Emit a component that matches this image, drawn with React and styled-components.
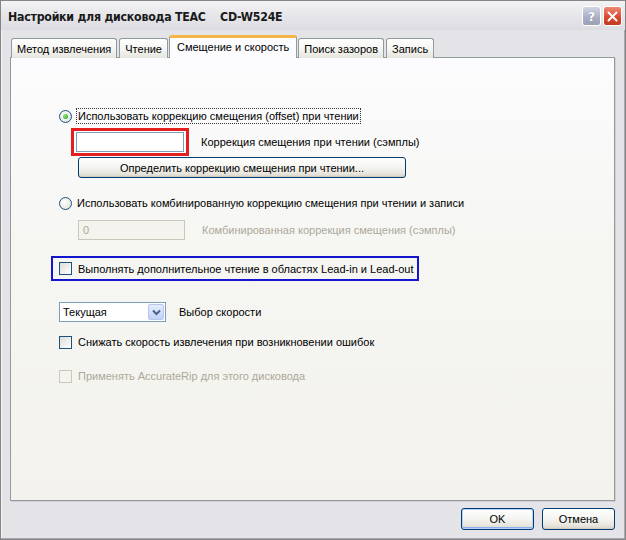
import React from "react";
import styled, { createGlobalStyle, css } from "styled-components";

const Global = createGlobalStyle`
  html, body { margin: 0; padding: 0; background: #e3e3e8; }
  * { box-sizing: border-box; }
`;

const FONT = `"Liberation Sans", Arial, sans-serif`;

const Window = styled.div`
  width: 626px;
  height: 540px;
  display: flex;
  flex-direction: column;
  background: #e4e3e8;
  border: 1px solid #858585;
  box-shadow: inset -1px -1px 0 #a8a8ac, inset 1px 0 0 #f4f4f6;
  font-family: ${FONT};
  font-size: 11px;
  color: #000;
`;

const TitleBar = styled.div`
  height: 29px;
  flex: none;
  display: flex;
  align-items: center;
  padding: 1px 3px 0 7px;
  background: linear-gradient(#f3f3f5, #e6e6ea 50%, #dcdce2);
`;

const TitleText = styled.div`
  flex: 1;
  font-family: "DejaVu Sans", "Liberation Sans", sans-serif;
  font-size: 13px;
  font-weight: bold;
  letter-spacing: -0.3px;
  color: #1a1a1a;
  white-space: pre;
  transform: scaleX(0.85);
  transform-origin: left center;
`;

const CaptionButton = styled.div`
  width: 19px;
  height: 20px;
  margin-left: 2px;
  border-radius: 3px;
  display: flex;
  align-items: center;
  justify-content: center;
  border: 1px solid #fff;
  ${(p) =>
    p.$close
      ? css`
          background: linear-gradient(#ee8a72, #d8452c 60%, #c33a22);
        `
      : css`
          background: linear-gradient(#d2d6e2, #a9aec4 60%, #9ba0b8);
        `}
`;

const HelpMark = styled.span`
  color: #fff;
  font-family: "DejaVu Sans", sans-serif;
  font-weight: bold;
  font-size: 13px;
  text-shadow: 0 0 1px #6a7090;
`;

const Body = styled.div`
  flex: 1;
  display: flex;
  flex-direction: column;
  padding: 5px 10px 0 9px;
`;

const TabRow = styled.div`
  height: 23px;
  display: flex;
  align-items: flex-end;
  padding-left: 1px;
  position: relative;
  z-index: 1;
  margin-bottom: -1px;
`;

const Tab = styled.div`
  height: ${(p) => (p.$active ? 23 : 20)}px;
  padding: 0 5px;
  margin-right: ${(p) => (p.$active ? 0 : 2)}px;
  margin-left: ${(p) => (p.$active ? -1 : 0)}px;
  display: flex;
  align-items: center;
  border: 1px solid #919b9c;
  border-bottom: none;
  border-radius: 3px 3px 0 0;
  white-space: nowrap;
  background: ${(p) =>
    p.$active
      ? "#fcfcfe"
      : "linear-gradient(#ffffff, #f3f3ef 60%, #e6e5de)"};
  ${(p) =>
    p.$active &&
    css`
      border-top: 3px solid #f5b544;
      padding: 0 7px;
      margin-right: 1px;
      padding-bottom: 2px;
    `}
`;

const Panel = styled.div`
  height: 444px;
  border: 1px solid #919b9c;
  background: linear-gradient(#fcfcfe, #f6f6f3 40%, #f3f2ec);
  box-shadow: 1px 1px 0 #d0d0d4;
  display: flex;
  flex-direction: column;
  padding: 49px 0 0 48px;
`;

const Row = styled.div`
  display: flex;
  align-items: center;
  height: ${(p) => p.$h || 18}px;
  margin-top: ${(p) => p.$mt || 0}px;
  margin-left: ${(p) => p.$ml || 0}px;
`;

const Radio = styled.span`
  width: 13px;
  height: 13px;
  flex: none;
  border-radius: 50%;
  border: 1px solid #1c5180;
  background: radial-gradient(circle at 40% 40%, #ffffff, #e4e4dd 80%);
  display: flex;
  align-items: center;
  justify-content: center;
  margin-right: 5px;
  &::after {
    content: "";
    display: ${(p) => (p.$checked ? "block" : "none")};
    width: 5px;
    height: 5px;
    border-radius: 50%;
    background: radial-gradient(circle at 35% 35%, #8ee27f, #21a121);
  }
`;

const Check = styled.span`
  width: 13px;
  height: 13px;
  flex: none;
  border: 1px solid ${(p) => (p.$disabled ? "#cac8bb" : "#1c5180")};
  background: ${(p) =>
    p.$disabled ? "#f4f3ee" : "linear-gradient(135deg, #dcdcd7, #ffffff)"};
  margin-right: 6px;
`;

const Label = styled.span`
  white-space: nowrap;
  color: ${(p) => (p.$disabled ? "#aca899" : "#000")};
  margin-left: ${(p) => p.$ml || 0}px;
`;

const FocusLabel = styled(Label)`
  outline: 1px dotted #333;
  padding: 1px 1px;
`;

const RedBox = styled.div`
  border: 3px solid #e41f1f;
  padding: 1px 2px;
  background: #fff;
  display: flex;
`;

const TextInput = styled.div`
  width: ${(p) => p.$w || 107}px;
  height: ${(p) => p.$h || 20}px;
  border: 1px solid ${(p) => (p.$disabled ? "#c9c7ba" : "#7f9db9")};
  background: ${(p) => (p.$disabled ? "#f4f3ee" : "#fff")};
  color: #aca899;
  padding-left: 4px;
  display: flex;
  align-items: center;
`;

const PushButton = styled.div`
  width: ${(p) => p.$w}px;
  height: ${(p) => p.$h || 21}px;
  border: 1px solid #003c74;
  border-radius: 3px;
  background: linear-gradient(#ffffff, #f4f4f0 50%, #e6e4dc 85%, #d6d0c5);
  box-shadow: inset 0 -1px 0 #d0ccc0;
  display: flex;
  align-items: center;
  justify-content: center;
  white-space: nowrap;
  ${(p) =>
    p.$default &&
    css`
      box-shadow: inset 0 0 0 1px #b7d2f8, inset 0 -2px 0 #8fb0ec;
    `}
`;

const BlueBox = styled.div`
  width: 368px;
  height: 25px;
  border: 2px solid #1515d0;
  display: flex;
  align-items: center;
  padding-left: 6px;
  margin-left: -8px;
`;

const Select = styled.div`
  width: 107px;
  height: 20px;
  border: 1px solid #7f9db9;
  background: #fff;
  display: flex;
  align-items: center;
  padding: 1px;
  margin-right: 13px;
`;

const SelectText = styled.span`
  flex: 1;
  padding-left: 2px;
`;

const SelectArrow = styled.span`
  width: 16px;
  height: 16px;
  border-radius: 2px;
  border: 1px solid #b6c5e9;
  background: linear-gradient(#e4ecfd, #c1d2f8);
  display: flex;
  align-items: center;
  justify-content: center;
`;

const Footer = styled.div`
  display: flex;
  justify-content: flex-end;
  gap: 8px;
  padding: 7px 0 0;
`;

export default function App() {
  return (
    <>
      <Global />
      <Window>
        <TitleBar>
          <TitleText>{"Настройки для дисковода TEAC    CD-W524E"}</TitleText>
          <CaptionButton>
            <HelpMark>?</HelpMark>
          </CaptionButton>
          <CaptionButton $close>
            <svg width="11" height="11" viewBox="0 0 11 11">
              <path d="M1.5 1.5 L9.5 9.5 M9.5 1.5 L1.5 9.5" stroke="#fff" strokeWidth="2" strokeLinecap="round" />
            </svg>
          </CaptionButton>
        </TitleBar>
        <Body>
          <TabRow>
            <Tab>Метод извлечения</Tab>
            <Tab>Чтение</Tab>
            <Tab $active>Смещение и скорость</Tab>
            <Tab>Поиск зазоров</Tab>
            <Tab>Запись</Tab>
          </TabRow>
          <Panel>
            <Row>
              <Radio $checked />
              <FocusLabel>Использовать коррекцию смещения (offset) при чтении</FocusLabel>
            </Row>
            <Row $h={28} $mt={3} $ml={12}>
              <RedBox>
                <TextInput $w={108} $h={20} />
              </RedBox>
              <Label $ml={12}>Коррекция смещения при чтении (сэмплы)</Label>
            </Row>
            <Row $h={21} $mt={1} $ml={19}>
              <PushButton $w={328}>Определить коррекцию смещения при чтении...</PushButton>
            </Row>
            <Row $mt={16}>
              <Radio />
              <Label>Использовать комбинированную коррекцию смещения при чтении и записи</Label>
            </Row>
            <Row $h={20} $mt={8} $ml={19}>
              <TextInput $disabled $w={107}>0</TextInput>
              <Label $disabled $ml={17}>Комбинированная коррекция смещения (сэмплы)</Label>
            </Row>
            <Row $h={25} $mt={16}>
              <BlueBox>
                <Check />
                <Label>Выполнять дополнительное чтение в областях Lead-in и Lead-out</Label>
              </BlueBox>
            </Row>
            <Row $h={20} $mt={21}>
              <Select>
                <SelectText>Текущая</SelectText>
                <SelectArrow>
                  <svg width="9" height="7" viewBox="0 0 9 7">
                    <path d="M1 1.5 L4.5 5 L8 1.5" fill="none" stroke="#4d6185" strokeWidth="2" />
                  </svg>
                </SelectArrow>
              </Select>
              <Label>Выбор скорости</Label>
            </Row>
            <Row $mt={11}>
              <Check />
              <Label>Снижать скорость извлечения при возникновении ошибок</Label>
            </Row>
            <Row $mt={16}>
              <Check $disabled />
              <Label $disabled>Применять AccurateRip для этого дисковода</Label>
            </Row>
          </Panel>
          <Footer>
            <PushButton $w={73} $h={22} $default>OK</PushButton>
            <PushButton $w={73} $h={22}>Отмена</PushButton>
          </Footer>
        </Body>
      </Window>
    </>
  );
}
